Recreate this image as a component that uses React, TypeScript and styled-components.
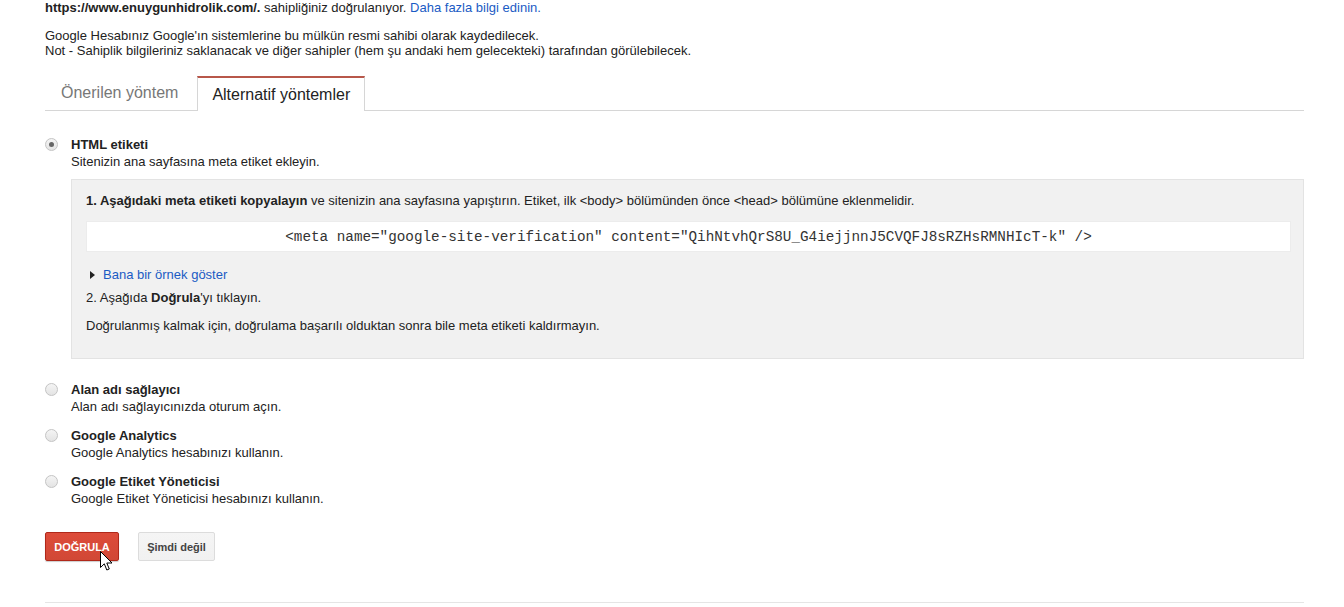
import React from "react";
import styled, { createGlobalStyle } from "styled-components";

const Global = createGlobalStyle`
  html, body { margin: 0; padding: 0; background: #fff; }
  body { font-family: "Liberation Sans", Arial, sans-serif; font-size: 13px; color: #222; }
`;

const Page = styled.div`
  width: 1259px;
  padding: 0 0 0 45px;
  position: relative;
`;

const Para = styled.p<{ $mt?: number }>`
  margin: ${(p) => p.$mt ?? 0}px 0 0;
  line-height: 15px;
`;

const Link = styled.a`
  color: #1a5bc4;
  text-decoration: none;
`;

const Tabs = styled.div`
  display: flex;
  margin-top: 18px;
  height: 34px;
  border-bottom: 1px solid #d6d6d6;
`;

const Tab = styled.div<{ $active?: boolean }>`
  box-sizing: border-box;
  height: ${(p) => (p.$active ? "35px" : "34px")};
  display: flex;
  align-items: center;
  font-size: 16px;
  padding: ${(p) => (p.$active ? "0 14px 0 14px" : "0 19px 1px 16px")};
  color: ${(p) => (p.$active ? "#222" : "#777")};
  background: #fff;
  ${(p) =>
    p.$active
      ? `border: 1px solid #d6d6d6; border-top: 2px solid #b8574a; border-bottom: none;`
      : ``}
`;

const Options = styled.div`
  margin-top: 25px;
  display: flex;
  flex-direction: column;
`;

const Option = styled.div<{ $mt?: number }>`
  display: flex;
  gap: 13px;
  margin-top: ${(p) => p.$mt ?? 0}px;
`;

const Radio = styled.span<{ $checked?: boolean }>`
  flex: none;
  box-sizing: border-box;
  width: 13px;
  height: 13px;
  margin-top: 2px;
  border-radius: 50%;
  border: 1px solid #c4c4c4;
  background: linear-gradient(#f4f4f4, #e4e4e4);
  display: flex;
  align-items: center;
  justify-content: center;
  &::after {
    content: "";
    display: ${(p) => (p.$checked ? "block" : "none")};
    width: 5px;
    height: 5px;
    border-radius: 50%;
    background: #666;
  }
`;

const OptionBody = styled.div`
  flex: 1;
  min-width: 0;
`;

const Title = styled.div`
  font-weight: bold;
  line-height: 18px;
`;

const Sub = styled.div`
  line-height: 15px;
`;

const Box = styled.div`
  margin-top: 10px;
  background: #f1f1f1;
  border: 1px solid #e3e3e3;
  padding: 13px 12px 25px 14px;
`;

const BoxLine = styled.div<{ $mt?: number }>`
  line-height: 15px;
  margin-top: ${(p) => p.$mt ?? 0}px;
`;

const Code = styled.div`
  margin-top: 13px;
  height: 31px;
  box-sizing: border-box;
  background: #fff;
  border: 1px solid #ececec;
  display: flex;
  align-items: center;
  justify-content: center;
  font-family: "Liberation Mono", "Courier New", monospace;
  font-size: 14.3px;
  color: #333;
  white-space: pre;
`;

const Toggle = styled.div`
  margin-top: 15px;
  display: flex;
  align-items: center;
  line-height: 15px;
  padding-left: 4px;
  gap: 8px;
`;

const Triangle = styled.span`
  width: 0;
  height: 0;
  border-top: 4px solid transparent;
  border-bottom: 4px solid transparent;
  border-left: 5px solid #222;
`;

const Buttons = styled.div`
  margin-top: 26px;
  display: flex;
  gap: 19px;
  position: relative;
`;

const Button = styled.button<{ $primary?: boolean }>`
  box-sizing: border-box;
  width: ${(p) => (p.$primary ? 74 : 77)}px;
  height: 29px;
  padding: 0;
  font-family: "Liberation Sans", Arial, sans-serif;
  font-size: 11px;
  font-weight: bold;
  border-radius: 2px;
  cursor: default;
  color: ${(p) => (p.$primary ? "#fff" : "#444")};
  border: 1px solid ${(p) => (p.$primary ? "#b0281a" : "#dcdcdc")};
  background: ${(p) =>
    p.$primary ? "linear-gradient(#dd4b39, #d14836)" : "linear-gradient(#f5f5f5, #f1f1f1)"};
  box-shadow: ${(p) => (p.$primary ? "0 1px 1px rgba(0,0,0,0.2)" : "none")};
`;

const Cursor = styled.svg`
  position: absolute;
  left: 55px;
  top: 19px;
`;

const Rule = styled.div`
  margin-top: 41px;
  border-top: 1px solid #e5e5e5;
`;

const codeText =
  '<meta name="google-site-verification" content="QihNtvhQrS8U_G4iejjnnJ5CVQFJ8sRZHsRMNHIcT-k" />';

export default function App() {
  return (
    <>
      <Global />
      <Page>
        <Para>
          <b>https://www.enuygunhidrolik.com/.</b> sahipliğiniz doğrulanıyor.{" "}
          <Link href="#">Daha fazla bilgi edinin.</Link>
        </Para>
        <Para $mt={13}>
          Google Hesabınız Google'ın sistemlerine bu mülkün resmi sahibi olarak kaydedilecek.
          <br />
          Not - Sahiplik bilgileriniz saklanacak ve diğer sahipler (hem şu andaki hem gelecekteki)
          tarafından görülebilecek.
        </Para>
        <Tabs>
          <Tab>Önerilen yöntem</Tab>
          <Tab $active>Alternatif yöntemler</Tab>
        </Tabs>
        <Options>
          <Option>
            <Radio $checked />
            <OptionBody>
              <Title>HTML etiketi</Title>
              <Sub>Sitenizin ana sayfasına meta etiket ekleyin.</Sub>
              <Box>
                <BoxLine>
                  <b>1. Aşağıdaki meta etiketi kopyalayın</b> ve sitenizin ana sayfasına
                  yapıştırın. Etiket, ilk &lt;body&gt; bölümünden önce &lt;head&gt; bölümüne
                  eklenmelidir.
                </BoxLine>
                <Code>{codeText}</Code>
                <Toggle>
                  <Triangle />
                  <Link href="#">Bana bir örnek göster</Link>
                </Toggle>
                <BoxLine $mt={8}>
                  2. Aşağıda <b>Doğrula</b>'yı tıklayın.
                </BoxLine>
                <BoxLine $mt={13}>
                  Doğrulanmış kalmak için, doğrulama başarılı olduktan sonra bile meta etiketi
                  kaldırmayın.
                </BoxLine>
              </Box>
            </OptionBody>
          </Option>
          <Option $mt={22}>
            <Radio />
            <OptionBody>
              <Title>Alan adı sağlayıcı</Title>
              <Sub>Alan adı sağlayıcınızda oturum açın.</Sub>
            </OptionBody>
          </Option>
          <Option $mt={13}>
            <Radio />
            <OptionBody>
              <Title>Google Analytics</Title>
              <Sub>Google Analytics hesabınızı kullanın.</Sub>
            </OptionBody>
          </Option>
          <Option $mt={13}>
            <Radio />
            <OptionBody>
              <Title>Google Etiket Yöneticisi</Title>
              <Sub>Google Etiket Yöneticisi hesabınızı kullanın.</Sub>
            </OptionBody>
          </Option>
        </Options>
        <Buttons>
          <Button $primary>DOĞRULA</Button>
          <Button>Şimdi değil</Button>
          <Cursor width="13" height="21" viewBox="0 0 13 21">
            <path
              d="M0.5 0.5 L0.5 16.5 L4.3 12.8 L6.8 19 L9.3 18 L6.8 12 L12 12 Z"
              fill="#fff"
              stroke="#000"
              strokeWidth="1"
              strokeLinejoin="miter"
            />
          </Cursor>
        </Buttons>
        <Rule />
      </Page>
    </>
  );
}
